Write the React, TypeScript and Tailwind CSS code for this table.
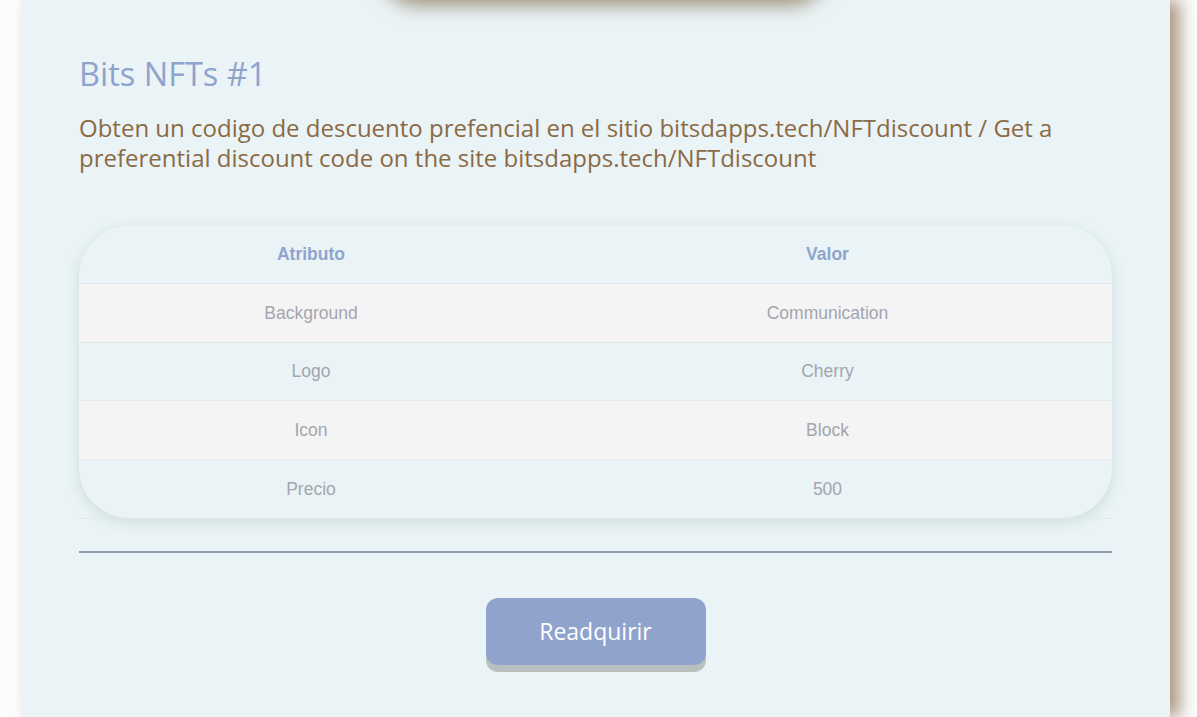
const rows = [
  { attr: 'Background', value: 'Communication' },
  { attr: 'Logo', value: 'Cherry' },
  { attr: 'Icon', value: 'Block' },
  { attr: 'Precio', value: '500' },
]

function App() {
  return (
    <div className="min-h-screen bg-[#fdfdfd] flex overflow-hidden">
      <div className="ml-[21px] w-[1149px] min-h-screen bg-[#eaf4f6] shadow-[10px_0_16px_rgba(120,85,50,0.6)] px-[58px] font-['Open_Sans',sans-serif]">
        {/* image card, mostly scrolled out above */}
        <div className="ml-[300px] -mt-[300px] h-[300px] w-[450px] rounded-b-[40px] bg-[#e8e2da] shadow-[0_6px_18px_rgba(110,85,50,0.6)]" />

        <h1 className="mt-[54px] text-[32.5px] leading-[40px] text-[#8fa3cf]">Bits NFTs #1</h1>

        <p className="mt-[19px] w-[1033px] text-[24px] leading-[30px] text-[#8b6a45]">
          Obten un codigo de descuento prefencial en el sitio bitsdapps.tech/NFTdiscount / Get a preferential discount code on the site bitsdapps.tech/NFTdiscount
        </p>

        <div className="mt-[53px] rounded-[50px] shadow-[0_4px_14px_rgba(60,90,100,0.16)] font-['Liberation_Sans',sans-serif]">
          <div className="grid grid-cols-[464px_1fr] h-[58px] items-center border-b border-[#e1e8e9] text-[17.5px] font-bold text-[#8fa3cf]">
            <div className="text-center">Atributo</div>
            <div className="text-center">Valor</div>
          </div>
          {rows.map((r, i) => (
            <div
              key={r.attr}
              className={`grid grid-cols-[464px_1fr] h-[58.5px] items-center border-b border-[#e4eaea] text-[17.5px] text-[#a4a5b0] ${i % 2 === 0 ? 'bg-[#f4f4f4]' : ''} ${i === rows.length - 1 ? 'rounded-b-[50px] border-b-0' : ''}`}
            >
              <div className="text-center">{r.attr}</div>
              <div className="text-center">{r.value}</div>
            </div>
          ))}
        </div>
        <div className="h-px bg-[#e1e9ea]" />

        <div className="mt-[32px] h-[2px] bg-[#8e9dad]" />

        <div className="flex justify-center mt-[45px]">
          <button className="w-[220px] h-[67px] rounded-[12px] bg-[#8fa3cd] text-white text-[23px] shadow-[0_7px_0_#b9c0c0]">
            Readquirir
          </button>
        </div>
      </div>
    </div>
  )
}

export default App
